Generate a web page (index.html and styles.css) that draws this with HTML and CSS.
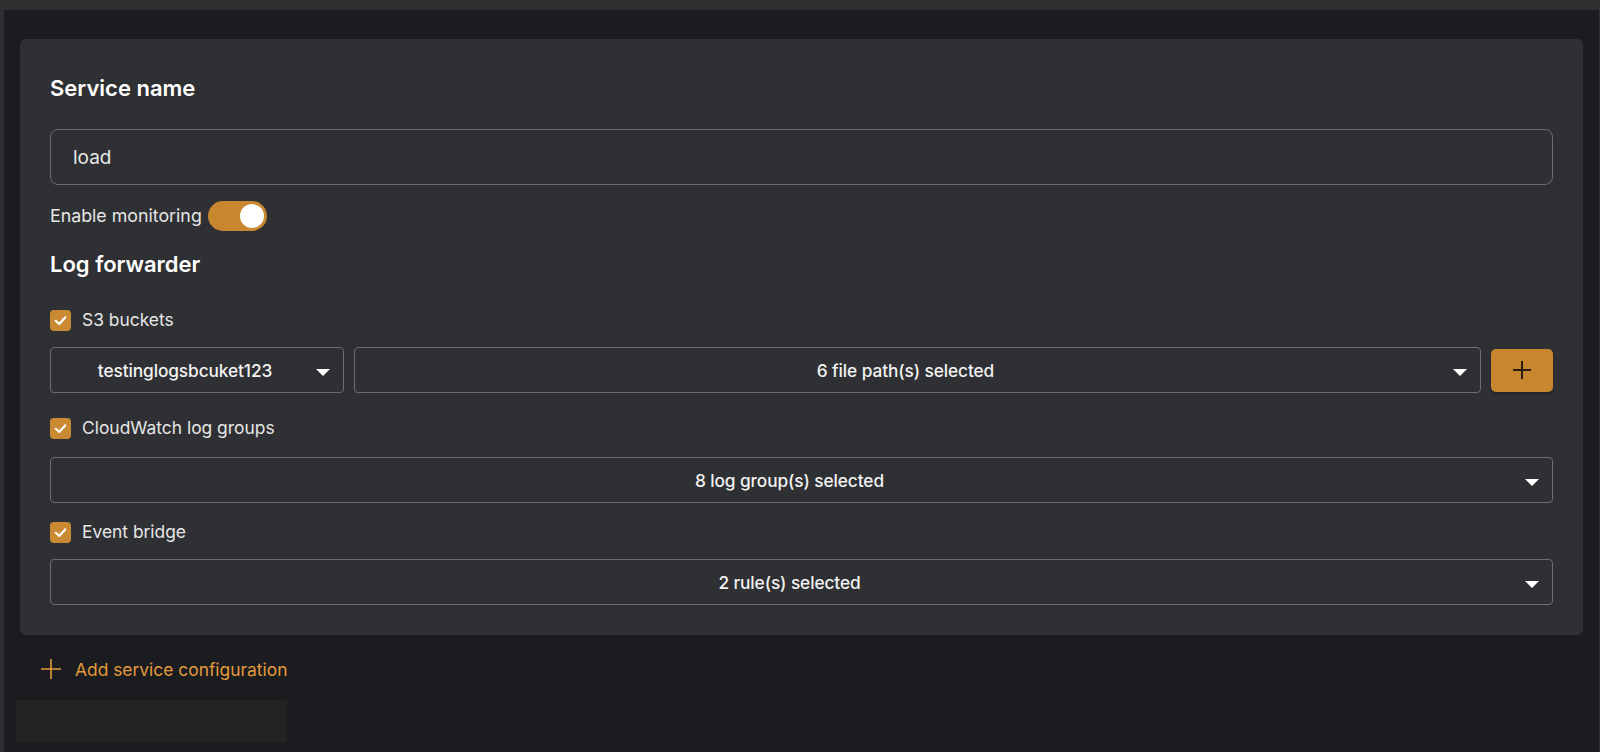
FILE: index.html
```html
<!DOCTYPE html>
<html lang="en">
<head>
<meta charset="utf-8">
<title>Service configuration</title>
<link rel="stylesheet" href="styles.css">
</head>
<body>
<div class="page">
  <section class="card">
    <h2 class="heading">Service name</h2>
    <div class="text-input">load</div>
    <div class="toggle-row">
      <span class="label label-toggle">Enable monitoring</span>
      <span class="toggle"><span class="knob"></span></span>
    </div>
    <h2 class="heading heading-log">Log forwarder</h2>

    <div class="check-row first">
      <span class="checkbox"><svg viewBox="0 0 21 21" width="21" height="21"><path d="M5.8 10.8 L9.2 14 L15.2 7.4" fill="none" stroke="#fff" stroke-width="2.2" stroke-linecap="round" stroke-linejoin="round"/></svg></span>
      <span class="label">S3 buckets</span>
    </div>
    <div class="select-row">
      <div class="select select-bucket"><span class="select-text">testinglogsbcuket123</span><span class="arrow"></span></div>
      <div class="select select-grow"><span class="select-text">6 file path(s) selected</span><span class="arrow"></span></div>
      <button class="add-btn" type="button"><svg viewBox="0 0 20 20" width="20" height="20"><path d="M10 1 V19 M1 10 H19" stroke="#2b1d0b" stroke-width="2" fill="none"/></svg></button>
    </div>

    <div class="check-row">
      <span class="checkbox"><svg viewBox="0 0 21 21" width="21" height="21"><path d="M5.8 10.8 L9.2 14 L15.2 7.4" fill="none" stroke="#fff" stroke-width="2.2" stroke-linecap="round" stroke-linejoin="round"/></svg></span>
      <span class="label">CloudWatch log groups</span>
    </div>
    <div class="select select-full cw"><span class="select-text">8 log group(s) selected</span><span class="arrow"></span></div>

    <div class="check-row eb-row">
      <span class="checkbox"><svg viewBox="0 0 21 21" width="21" height="21"><path d="M5.8 10.8 L9.2 14 L15.2 7.4" fill="none" stroke="#fff" stroke-width="2.2" stroke-linecap="round" stroke-linejoin="round"/></svg></span>
      <span class="label">Event bridge</span>
    </div>
    <div class="select select-full eb"><span class="select-text">2 rule(s) selected</span><span class="arrow"></span></div>
  </section>

  <div class="add-service">
    <svg viewBox="0 0 20 20" width="20" height="20"><path d="M10 0 V20 M0 10 H20" stroke="#e39a3c" stroke-width="1.6" fill="none"/></svg>
    <span>Add service configuration</span>
  </div>
  <div class="footer-box"></div>
</div>
</body>
</html>
```

FILE: styles.css
```css
html, body {
  margin: 0;
  padding: 0;
}
body {
  background: #2e2f31;
  font-family: Inter, "Noto Sans", "Liberation Sans", sans-serif;
  color: #ececec;
  width: 1600px;
  height: 752px;
  overflow: hidden;
}
.page {
  margin: 10px 1px 0 4px;
  height: 742px;
  background: #1b1c1f;
  padding: 29px 16px 0 16px;
  box-sizing: border-box;
}
.card {
  background: #2f3033;
  border-radius: 6px;
  padding: 35px 30px 30px 30px;
  display: flex;
  flex-direction: column;
}
.heading {
  margin: 0;
  font-size: 22px;
  line-height: 28px;
  font-weight: 600;
  color: #ffffff;
}
.text-input {
  margin-top: 27px;
  height: 56px;
  box-sizing: border-box;
  border: 1px solid #6c6d70;
  border-radius: 8px;
  padding: 0 22px;
  display: flex;
  align-items: center;
  font-size: 19px;
  color: #e8e8e8;
}
.toggle-row {
  margin-top: 16px;
  display: flex;
  align-items: center;
  gap: 6px;
  height: 30px;
}
.label {
  font-size: 17.4px;
  line-height: 24px;
  color: #e6e6e6;
}
.label-toggle {
  font-size: 17.8px;
}
.toggle {
  width: 59px;
  height: 30px;
  border-radius: 15px;
  background: #c8862f;
  display: flex;
  align-items: center;
  justify-content: flex-end;
  padding-right: 3px;
  box-sizing: border-box;
}
.knob {
  width: 24px;
  height: 24px;
  border-radius: 50%;
  background: #ffffff;
}
.heading-log {
  margin-top: 19px;
}
.check-row {
  display: flex;
  align-items: center;
  gap: 11px;
  height: 24px;
  margin-top: 23px;
}
.check-row.first {
  margin-top: 30px;
}
.check-row.eb-row {
  margin-top: 17px;
}
.checkbox {
  width: 21px;
  height: 21px;
  border-radius: 4px;
  background: #c98a33;
  display: flex;
}
.select-row {
  margin-top: 15px;
  display: flex;
  align-items: center;
  gap: 10px;
}
.select {
  position: relative;
  height: 46px;
  box-sizing: border-box;
  border: 1px solid #6c6d70;
  border-radius: 4px;
  display: flex;
  align-items: center;
  justify-content: center;
  padding: 0 40px 0 16px;
  font-size: 17.3px;
  font-weight: 500;
  color: #f2f2f2;
  letter-spacing: -0.1px;
}
.select-bucket {
  width: 294px;
}
.select-grow {
  flex: 1;
}
.select-full {
  margin-top: 17px;
}
.select-full.eb {
  margin-top: 15px;
}
.arrow {
  position: absolute;
  right: 13px;
  top: 21px;
  width: 0;
  height: 0;
  border-left: 7.5px solid transparent;
  border-right: 7.5px solid transparent;
  border-top: 7px solid #ffffff;
}
.add-btn {
  width: 62px;
  height: 43px;
  border: none;
  border-radius: 5px;
  background: #c8862f;
  display: flex;
  align-items: center;
  justify-content: center;
  padding: 0;
  box-shadow: 0 2px 2px rgba(0,0,0,0.25);
}
.add-service {
  margin-top: 22px;
  margin-left: 21px;
  height: 24px;
  display: flex;
  align-items: center;
  gap: 14px;
  font-size: 17.4px;
  color: #e39a3c;
}
.footer-box {
  margin-top: 19px;
  margin-left: -4px;
  width: 271px;
  height: 42px;
  background: #232323;
}
```
